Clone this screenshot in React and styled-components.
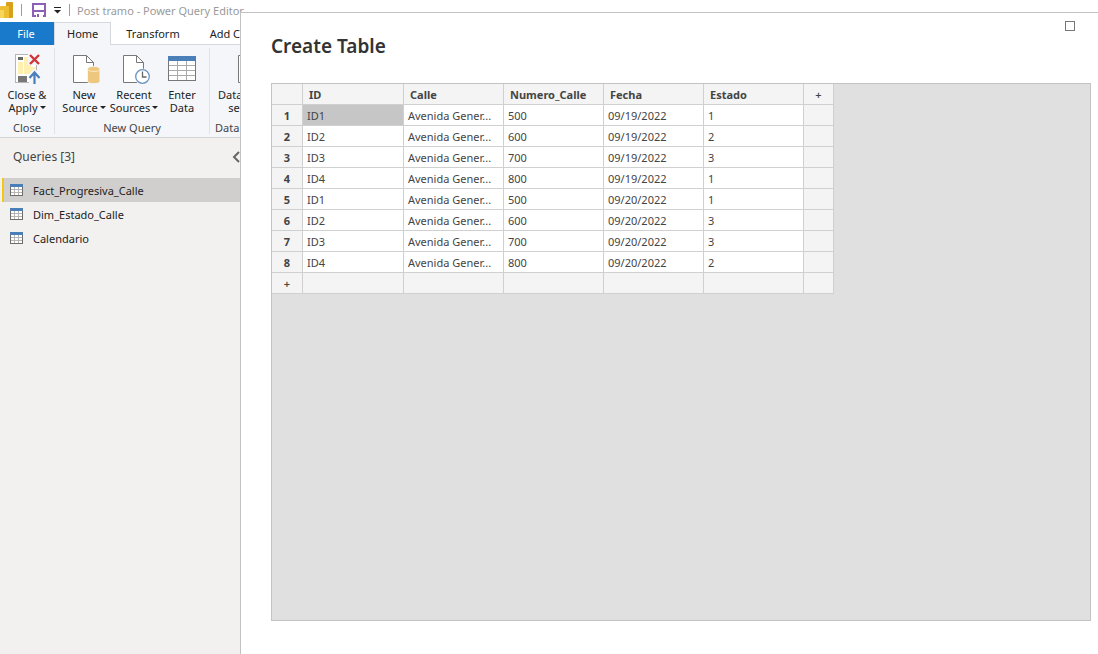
import React from "react";
import styled, { createGlobalStyle } from "styled-components";

const GlobalStyle = createGlobalStyle`
  *, *::before, *::after { box-sizing: border-box; }
  body { margin: 0; }
  body, button {
    font-family: "Segoe UI", "Noto Sans", "Open Sans", sans-serif;
    font-size: 11px;
    line-height: 13px;
  }
  button {
    margin: 0;
    padding: 0;
    border: 0;
    background: none;
    color: inherit;
  }
`;

const Editor = styled.div`
  position: relative;
  display: flex;
  flex-direction: column;
  min-height: 100vh;
  overflow: hidden;
  background: #f2f1ef;
  color: #222222;
`;

const TitleBar = styled.header`
  display: flex;
  align-items: center;
  height: 22px;
  padding-bottom: 2px;
  background: #ffffff;
  color: #9a9a9a;
  white-space: nowrap;
`;

const BarDivider = styled.span`
  width: 1px;
  height: 12px;
  margin: 0 ${(p) => p.$after}px 0 8px;
  background: #9c9c9c;
`;

const IconButton = styled.button`
  display: flex;
  align-items: center;
  justify-content: center;
  margin-right: ${(p) => p.$after || 0}px;
`;

const WindowTitle = styled.span`
  font-size: 11px;
`;

const TabList = styled.nav`
  display: flex;
  height: 23px;
  background: #ffffff;
  box-shadow: inset 0 -1px 0 #d5d9de;
`;

const Tab = styled.button`
  padding: 0 ${(p) => (p.$active ? 12 : 14)}px 2px;
  border: solid ${(p) => (p.$active ? "#d5d9de" : "transparent")};
  border-width: 1px 1px 0;
  background: ${(p) => (p.$active ? "#f4f6f9" : "transparent")};
  color: #222222;
  white-space: nowrap;
`;

const FileTab = styled.button`
  width: 54px;
  padding: 0 2px 0 0;
  background: #1979ca;
  color: #ffffff;
`;

const Ribbon = styled.div`
  display: flex;
  height: 93px;
  padding: 3px 0;
  border-bottom: 1px solid #d2d4d6;
  background: #f4f6f9;
`;

const Group = styled.section`
  display: flex;
  flex-direction: column;
  align-items: center;
  justify-content: space-between;
  padding: 4px 5px 0;
  border-right: 1px solid #dfe2e5;
  white-space: nowrap;
`;

const GroupButtons = styled.div`
  display: flex;
`;

const GroupLabel = styled.span`
  color: #444444;
`;

const RibbonButton = styled.button`
  display: flex;
  flex-direction: column;
  align-items: center;
  gap: 4px;
  width: ${(p) => p.$width}px;

  svg { display: block; }
`;

const Caption = styled.span`
  text-align: center;
  white-space: pre;
`;

const Caret = styled.span`
  display: inline-block;
  margin-left: 2px;
  border: 3px solid transparent;
  border-top-color: #222222;
  border-bottom: 0;
  vertical-align: 3px;
`;

const Queries = styled.aside`
  flex: 1;
  width: 244px;
`;

const QueriesHeader = styled.div`
  display: flex;
  align-items: center;
  justify-content: space-between;
  height: 40px;
  padding: 0 2px 2px 13px;
`;

const QueriesTitle = styled.h2`
  margin: 0;
  color: #444444;
  font-size: 12px;
  font-weight: 400;
  line-height: 16px;
`;

const QueryItem = styled.button`
  display: flex;
  align-items: center;
  gap: 10px;
  width: calc(100% - 2px);
  height: 24px;
  margin-left: 2px;
  padding-left: 6px;
  border-left: 2px solid ${(p) => (p.$active ? "#f2c811" : "transparent")};
  background: ${(p) => (p.$active ? "#d0cfcd" : "transparent")};
`;

const Dialog = styled.section`
  position: absolute;
  inset: 12px 0 0 240px;
  display: flex;
  flex-direction: column;
  padding: 8px 7px 33px 30px;
  border: solid #c2c2c2;
  border-width: 1px 0 0 1px;
  background: #ffffff;
`;

const DialogHeader = styled.header`
  display: flex;
  align-items: flex-start;
  justify-content: space-between;
  height: 62px;
`;

const DialogTitle = styled.h1`
  margin: 12px 0 0;
  color: #333333;
  font-size: 19px;
  font-weight: 600;
  line-height: 26px;
`;

const Maximize = styled.button`
  width: 10px;
  height: 10px;
  margin-right: 16px;
  border: 1px solid #777777;
`;

const GridPanel = styled.div`
  flex: 1;
  border: 1px solid #c3c3c3;
  background: #e0e0e0;
`;

const Table = styled.table`
  width: 562px;
  table-layout: fixed;
  border-collapse: separate;
  border-spacing: 0;
  color: #444444;

  th, td {
    height: 21px;
    padding: 0 4px;
    border: solid #d0d0d0;
    border-width: 0 1px 1px 0;
    background: #ffffff;
    overflow: hidden;
    text-align: left;
    text-overflow: ellipsis;
    white-space: nowrap;
  }
  th {
    padding-left: 6px;
    background: #f4f4f4;
    font-weight: 700;
  }
`;

const RowNumber = styled.th`
  && { padding: 0; text-align: center; }
`;

const Cell = styled.td`
  && { background: ${(p) => (p.$selected ? "#c6c6c6" : "#ffffff")}; }
`;

const BlankCell = styled.td`
  && { padding: 0; background: #f4f4f4; }
`;

const AddButton = styled.button`
  display: block;
  width: 100%;
  height: 20px;
  font-weight: 600;
`;

const TableIcon = () => (
  <svg width="13" height="12" aria-hidden="true">
    <rect x="0.5" y="0.5" width="12" height="11" fill="#fff" />
    <path d="M4.5 3V11M8.5 3V11M1 5.5H12M1 8.5H12" stroke="#b5b5b5" />
    <rect x="0.5" y="0.5" width="12" height="11" fill="none" stroke="#6d6d6d" />
    <rect width="13" height="3" fill="#4a7fb8" />
  </svg>
);

const PagePath = () => (
  <>
    <path d="M5.5 3.5H18.5L25.5 10.5V30.5H5.5Z" fill="#fff" stroke="#777" />
    <path d="M18.5 3.5V10.5H25.5" fill="none" stroke="#777" />
  </>
);

const CloseApplyIcon = () => (
  <svg width="28" height="32" aria-hidden="true">
    <rect x="2.5" y="2.5" width="21" height="28" fill="#fff" stroke="#b5b5b5" />
    <rect x="5" y="5" width="5" height="3" fill="#666" />
    <path d="M5 10H10V22H5ZM11 5H16V12L19 15H23V18L16 22H11Z" fill="#ffefb0" />
    <rect x="5" y="24" width="9" height="6" fill="#777" />
    <path d="M15 1H28V13H15Z" fill="#f4f6f9" />
    <path d="M17 3L26 12M26 3L17 12" stroke="#d13438" strokeWidth="2.4" />
    <path d="M16 22L21.5 16L27 22V32H16Z" fill="#f4f6f9" />
    <path d="M21.5 32V21M16.5 26L21.5 20.5L26.5 26" fill="none" stroke="#4a7fb8" strokeWidth="2.2" />
  </svg>
);

const NewSourceIcon = () => (
  <svg width="32" height="32" aria-hidden="true">
    <PagePath />
    <path d="M19.5 17C19.5 13.5 32 13.5 32 17V29.5C32 32.5 19.5 32.5 19.5 29.5Z" fill="#edc77d" stroke="#f4f6f9" />
    <path d="M20 17.5C20 20 32 20 32 17.5" fill="none" stroke="#fbe9c4" />
  </svg>
);

const RecentIcon = () => (
  <svg width="32" height="32" aria-hidden="true">
    <PagePath />
    <circle cx="24.5" cy="24.5" r="8" fill="#f4f6f9" />
    <circle cx="24.5" cy="24.5" r="6.8" fill="#fff" stroke="#6b94c2" strokeWidth="1.3" />
    <path d="M24.5 19.5V25H28.5" fill="none" stroke="#666" strokeWidth="1.3" />
  </svg>
);

const EnterDataIcon = () => (
  <svg width="28" height="32" aria-hidden="true">
    <rect x="0.5" y="4.5" width="27" height="24" fill="#fff" stroke="#777" />
    <path d="M9.5 9V28M18.5 9V28M1 13.5H27M1 18.5H27M1 23.5H27" stroke="#aaa" />
    <rect y="4" width="28" height="5" fill="#4a7fb8" />
  </svg>
);

const SettingsIcon = () => (
  <svg width="32" height="32" aria-hidden="true">
    <PagePath />
    <circle cx="24" cy="24" r="5" fill="#fff" stroke="#777" strokeWidth="3" />
  </svg>
);

const LogoIcon = () => (
  <svg width="13" height="16" aria-label="Power BI">
    <path d="M6 1Q6 0 7 0H12Q13 0 13 1V15Q13 16 12 16H6Z" fill="#d9a01c" />
    <path d="M0 5Q0 4 1 4H8Q9 4 9 5V16H0Z" fill="#edbe32" />
    <path d="M0 8H3Q4 8 4 9V16H0Z" fill="#f6d75c" />
  </svg>
);

const SaveIcon = () => (
  <svg width="14" height="14" aria-hidden="true">
    <path d="M1 1H13V13H1Z" fill="#fff" stroke="#8d5fb5" strokeWidth="2" />
    <path d="M1 8H13" stroke="#8d5fb5" strokeWidth="2" />
    <path d="M4 10H11V14H4Z" fill="#fff" />
    <path d="M5 11H7V14H5Z" fill="#8d5fb5" />
  </svg>
);

const columns = ["ID", "Calle", "Numero_Calle", "Fecha", "Estado"];
const street = "Avenida Gener...";
const rows = [
  ["ID1", street, "500", "09/19/2022", "1"],
  ["ID2", street, "600", "09/19/2022", "2"],
  ["ID3", street, "700", "09/19/2022", "3"],
  ["ID4", street, "800", "09/19/2022", "1"],
  ["ID1", street, "500", "09/20/2022", "1"],
  ["ID2", street, "600", "09/20/2022", "3"],
  ["ID3", street, "700", "09/20/2022", "3"],
  ["ID4", street, "800", "09/20/2022", "2"],
];
const queries = ["Fact_Progresiva_Calle", "Dim_Estado_Calle", "Calendario"];
const columnWidths = [31, 101, 100, 100, 100, 100, 30];

export default function App() {
  return (
    <Editor>
      <GlobalStyle />
      <TitleBar>
        <LogoIcon />
        <BarDivider $after={10} />
        <IconButton aria-label="Save" $after={8}><SaveIcon /></IconButton>
        <IconButton aria-label="Customize toolbar">
          <svg width="7" height="7" aria-hidden="true">
            <path d="M0 0.5H7" stroke="#222" />
            <path d="M0 3H7L3.5 6.5Z" fill="#222" />
          </svg>
        </IconButton>
        <BarDivider $after={7} />
        <WindowTitle>Post tramo - Power Query Editor</WindowTitle>
      </TitleBar>
      <TabList>
        <FileTab>File</FileTab>
        <Tab $active>Home</Tab>
        <Tab>Transform</Tab>
        <Tab>Add Column</Tab>
      </TabList>
      <Ribbon>
        <Group>
          <GroupButtons>
            <RibbonButton $width={44}>
              <CloseApplyIcon />
              <Caption>{"Close &\nApply"}<Caret /></Caption>
            </RibbonButton>
          </GroupButtons>
          <GroupLabel>Close</GroupLabel>
        </Group>
        <Group>
          <GroupButtons>
            <RibbonButton $width={48}>
              <NewSourceIcon />
              <Caption>{"New\nSource"}<Caret /></Caption>
            </RibbonButton>
            <RibbonButton $width={52}>
              <RecentIcon />
              <Caption>{"Recent\nSources"}<Caret /></Caption>
            </RibbonButton>
            <RibbonButton $width={44}>
              <EnterDataIcon />
              <Caption>{"Enter\nData"}</Caption>
            </RibbonButton>
          </GroupButtons>
          <GroupLabel>New Query</GroupLabel>
        </Group>
        <Group>
          <GroupButtons>
            <RibbonButton $width={60}>
              <SettingsIcon />
              <Caption>{"Data source\nsettings"}</Caption>
            </RibbonButton>
          </GroupButtons>
          <GroupLabel>Data Sources</GroupLabel>
        </Group>
      </Ribbon>
      <Queries>
        <QueriesHeader>
          <QueriesTitle>Queries [3]</QueriesTitle>
          <IconButton aria-label="Collapse queries">
            <svg width="10" height="12" aria-hidden="true">
              <path d="M7 1L2 6L7 11" fill="none" stroke="#666" strokeWidth="2" />
            </svg>
          </IconButton>
        </QueriesHeader>
        {queries.map((name, i) => (
          <QueryItem key={name} $active={i === 0}>
            <TableIcon />
            {name}
          </QueryItem>
        ))}
      </Queries>
      <Dialog role="dialog" aria-labelledby="dialog-title">
        <DialogHeader>
          <DialogTitle id="dialog-title">Create Table</DialogTitle>
          <Maximize aria-label="Maximize" />
        </DialogHeader>
        <GridPanel>
          <Table>
            <colgroup>
              {columnWidths.map((w, i) => <col key={i} width={w} />)}
            </colgroup>
            <thead>
              <tr>
                <RowNumber />
                {columns.map((name) => <th key={name} scope="col">{name}</th>)}
                <RowNumber><AddButton aria-label="Add column">+</AddButton></RowNumber>
              </tr>
            </thead>
            <tbody>
              {rows.map((row, r) => (
                <tr key={r}>
                  <RowNumber scope="row">{r + 1}</RowNumber>
                  {row.map((value, c) => (
                    <Cell key={c} $selected={r === 0 && c === 0}>{value}</Cell>
                  ))}
                  <BlankCell />
                </tr>
              ))}
              <tr>
                <RowNumber><AddButton aria-label="Add row">+</AddButton></RowNumber>
                {columns.map((name) => <BlankCell key={name} />)}
                <BlankCell />
              </tr>
            </tbody>
          </Table>
        </GridPanel>
      </Dialog>
    </Editor>
  );
}
